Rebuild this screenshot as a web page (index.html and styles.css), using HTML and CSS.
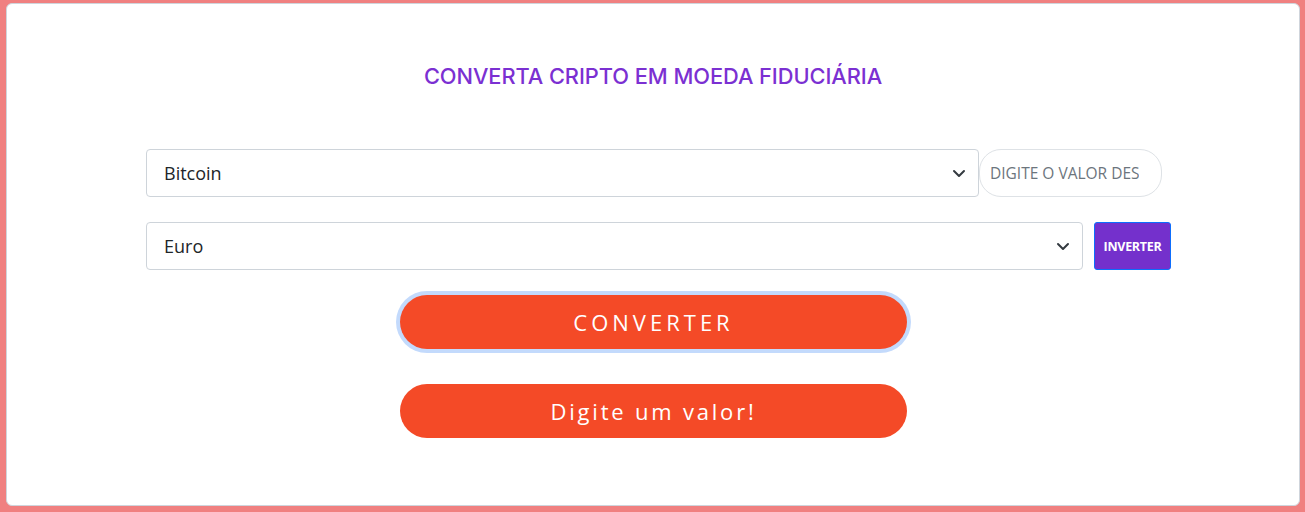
FILE: index.html
```html
<!DOCTYPE html>
<html lang="pt-BR">
<head>
<meta charset="utf-8">
<title>Conversor</title>
<link rel="stylesheet" href="styles.css">
</head>
<body>
<main class="card">
  <h1 class="title">CONVERTA CRIPTO EM MOEDA FIDUCIÁRIA</h1>
  <div class="rows">
    <div class="row row-first">
      <div class="select-wrap select-crypto">
        <select class="select">
          <option>Bitcoin</option>
        </select>
        <svg class="chevron" width="14" height="10" viewBox="0 0 14 10"><path d="M2 3l5 5 5-5" fill="none" stroke="#343a40" stroke-width="2" stroke-linecap="round" stroke-linejoin="round"/></svg>
      </div>
      <input class="amount" type="text" placeholder="DIGITE O VALOR DESEJADO">
    </div>
    <div class="row row-second">
      <div class="select-wrap select-fiat">
        <select class="select">
          <option>Euro</option>
        </select>
        <svg class="chevron" width="14" height="10" viewBox="0 0 14 10"><path d="M2 3l5 5 5-5" fill="none" stroke="#343a40" stroke-width="2" stroke-linecap="round" stroke-linejoin="round"/></svg>
      </div>
      <button class="invert">INVERTER</button>
    </div>
  </div>
  <button class="pill pill-focus">CONVERTER</button>
  <button class="pill pill-result">Digite um valor!</button>
</main>
</body>
</html>
```

FILE: styles.css
```css
html, body {
  height: 100%;
}
body {
  margin: 0;
  padding: 3px 5px 6px 6px;
  box-sizing: border-box;
  background: #f08080;
  display: flex;
  font-family: "Open Sans", "Liberation Sans", sans-serif;
}
.card {
  flex: 1;
  background: #fff;
  border: 1px solid #cfd5dc;
  border-radius: 6px;
  display: flex;
  flex-direction: column;
  align-items: stretch;
}
.title {
  margin: 59px 0 0;
  text-align: center;
  font-family: "Inter", "Open Sans", sans-serif;
  font-weight: 500;
  font-size: 21.8px;
  line-height: 26px;
  color: #7b30d2;
  letter-spacing: -0.05px;
}
.rows {
  margin: 60px 0 0 139px;
  width: 1025px;
  display: flex;
  flex-direction: column;
  gap: 25px;
}
.row {
  display: flex;
  height: 48px;
}
.row-first {
  gap: 0;
}
.row-second {
  gap: 11px;
}
.select-wrap {
  position: relative;
  display: flex;
}
.select-crypto {
  width: 833px;
}
.select-fiat {
  flex: 1;
}
.select {
  appearance: none;
  -webkit-appearance: none;
  width: 100%;
  height: 48px;
  box-sizing: border-box;
  border: 1px solid #ced4da;
  border-radius: 4px;
  background: #fff;
  padding: 0 40px 0 17px;
  font-family: "Open Sans", sans-serif;
  font-size: 18px;
  color: #212529;
}
.chevron {
  position: absolute;
  right: 13px;
  top: 19px;
  pointer-events: none;
}
.amount {
  width: 183px;
  height: 48px;
  box-sizing: border-box;
  border: 1px solid #dee2e6;
  border-radius: 22px;
  padding: 0 22px 0 10px;
  font-family: "Open Sans", sans-serif;
  font-size: 15.5px;
  color: #212529;
  outline: none;
}
.amount::placeholder {
  color: #6c757d;
}
.invert {
  width: 77px;
  height: 48px;
  box-sizing: border-box;
  background: #7430cc;
  border: 1px solid #0d6efd;
  border-radius: 3px;
  color: #fff;
  font-family: "Open Sans", sans-serif;
  font-weight: 700;
  font-size: 12.5px;
  letter-spacing: -0.3px;
  padding: 0;
}
.pill {
  align-self: center;
  width: 507px;
  height: 54px;
  border: none;
  border-radius: 27px;
  background: #f44a27;
  color: #fff;
  font-family: "Open Sans", sans-serif;
  font-size: 22px;
  padding: 0;
  margin-left: 1px;
}
.pill-focus {
  margin-top: 25px;
  letter-spacing: 4px;
  box-shadow: 0 0 0 4px #c3dafc;
}
.pill-result {
  margin-top: 35px;
  letter-spacing: 2.8px;
}
```
